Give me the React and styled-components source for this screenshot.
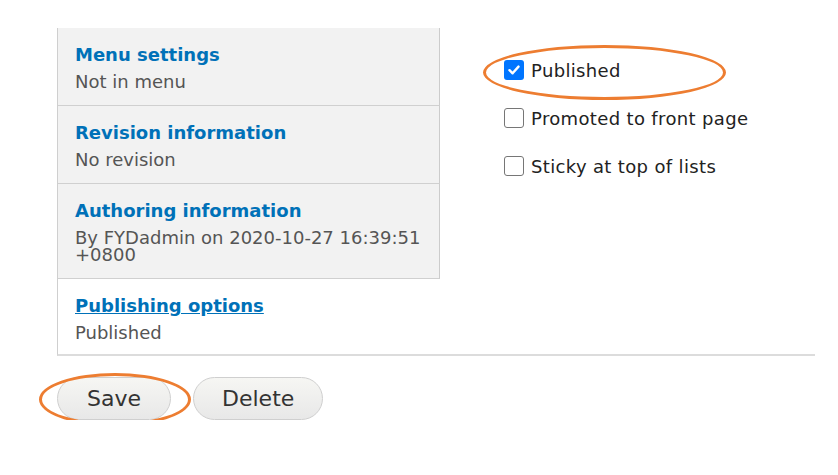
import React, { useState } from 'react';
import styled, { createGlobalStyle } from 'styled-components';

const GlobalStyle = createGlobalStyle`
  body {
    margin: 0;
    background: #fff;
    font-family: "DejaVu Sans", Verdana, sans-serif;
  }
`;

const Page = styled.div`
  padding: 28px 0 0 57px;
`;

const Frame = styled.div`
  display: flex;
  width: 757px;
  border-left: 1px solid #cfcfcf;
  border-bottom: 2px solid #dcdcdc;
`;

const Sidebar = styled.div`
  width: 382px;
  display: flex;
  flex-direction: column;
`;

const Tab = styled.div`
  padding: 15px 18px ${p => (p.$last ? 13 : 15)}px 17px;
  background: ${p => (p.$active ? '#fff' : '#f2f2f2')};
  border-right: 1px solid ${p => (p.$active ? 'transparent' : '#cccccc')};
  border-bottom: ${p => (p.$last ? 'none' : '1px solid #d0d0d0')};
`;

const TabTitle = styled.a`
  display: block;
  font-size: 18px;
  line-height: 24px;
  font-weight: bold;
  color: #0071b8;
  text-decoration: ${p => (p.$active ? 'underline' : 'none')};
  cursor: pointer;
`;

const TabSummary = styled.div`
  margin-top: 6px;
  font-size: 18px;
  line-height: 17px;
  color: #555;
`;

const Pane = styled.div`
  flex: 1;
  display: flex;
  flex-direction: column;
  gap: 24px;
  padding: 30px 0 0 64px;
`;

const Option = styled.label`
  position: relative;
  display: flex;
  align-items: center;
  gap: 7px;
  height: 24px;
  font-size: 18px;
  letter-spacing: 0.35px;
  color: #222;
  cursor: pointer;
`;

const Box = styled.span`
  width: 20px;
  height: 20px;
  box-sizing: border-box;
  border-radius: 3px;
  border: ${p => (p.$checked ? 'none' : '1.5px solid #767676')};
  background: ${p => (p.$checked ? '#0075ff' : '#fff')};
  display: flex;
  align-items: center;
  justify-content: center;
  flex-shrink: 0;
`;

const Mark = styled.span`
  position: absolute;
  border: 3px solid #ed7d31;
  border-radius: 50%;
  pointer-events: none;
`;

const Actions = styled.div`
  display: flex;
  gap: 22px;
  margin-top: 21px;
`;

const ButtonWrap = styled.div`
  position: relative;
`;

const Button = styled.button`
  height: 43px;
  padding: 0 ${p => p.$pad || 29}px;
  border: 1px solid #cfcfcf;
  border-radius: 22px;
  background: linear-gradient(#f6f6f3, #e8e8e8);
  font-family: "DejaVu Sans", Verdana, sans-serif;
  font-size: 22px;
  color: #333;
  cursor: pointer;
`;

const tabs = [
  { title: 'Menu settings', summary: 'Not in menu' },
  { title: 'Revision information', summary: 'No revision' },
  { title: 'Authoring information', summary: 'By FYDadmin on 2020-10-27 16:39:51 +0800' },
  { title: 'Publishing options', summary: 'Published', active: true },
];

function Check({ checked }) {
  return (
    <Box $checked={checked}>
      {checked && (
        <svg width="14" height="14" viewBox="0 0 14 14">
          <path d="M2.5 7.2 L5.6 10.3 L11.5 3.6" fill="none" stroke="#fff" strokeWidth="2.4" strokeLinecap="round" strokeLinejoin="round" />
        </svg>
      )}
    </Box>
  );
}

export default function App() {
  const [opts, setOpts] = useState({ published: true, promoted: false, sticky: false });
  const toggle = key => setOpts(prev => ({ ...prev, [key]: !prev[key] }));

  return (
    <Page>
      <GlobalStyle />
      <Frame>
        <Sidebar>
          {tabs.map((t, i) => (
            <Tab key={t.title} $active={t.active} $last={i === tabs.length - 1}>
              <TabTitle $active={t.active}>{t.title}</TabTitle>
              <TabSummary>{t.summary}</TabSummary>
            </Tab>
          ))}
        </Sidebar>
        <Pane>
          <Option onClick={() => toggle('published')}>
            <Check checked={opts.published} />
            Published
            <Mark style={{ left: -21, top: -13, width: 237, height: 49 }} />
          </Option>
          <Option onClick={() => toggle('promoted')}>
            <Check checked={opts.promoted} />
            Promoted to front page
          </Option>
          <Option onClick={() => toggle('sticky')}>
            <Check checked={opts.sticky} />
            Sticky at top of lists
          </Option>
        </Pane>
      </Frame>
      <Actions>
        <ButtonWrap>
          <Button>Save</Button>
          <Mark style={{ left: -18, top: -4, width: 146, height: 47 }} />
        </ButtonWrap>
        <Button $pad={28}>Delete</Button>
      </Actions>
    </Page>
  );
}
